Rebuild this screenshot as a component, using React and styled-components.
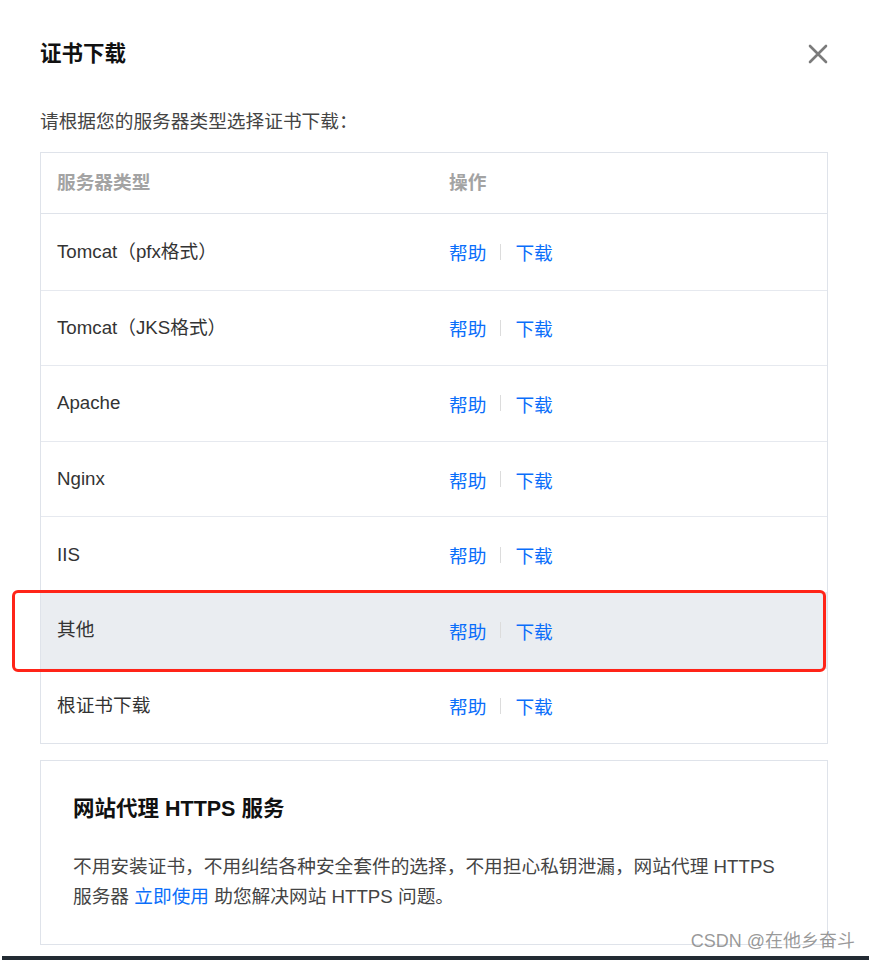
import React from "react";
import styled, { createGlobalStyle } from "styled-components";

const GlobalStyle = createGlobalStyle`
  body {
    margin: 0;
    background: #fff;
    font-family: "Liberation Sans", "Noto Sans CJK SC", sans-serif;
    color: #333;
  }
`;

const Page = styled.div`
  position: relative;
  width: 869px;
  height: 960px;
  overflow: hidden;
`;

const Dialog = styled.div`
  padding: 36px 41px 0 40px;
`;

const Header = styled.div`
  display: flex;
  justify-content: space-between;
  align-items: center;
  height: 36px;
`;

const Title = styled.h1`
  margin: 0;
  font-size: 21.5px;
  font-weight: 700;
  color: #111;
  line-height: 36px;
`;

const CloseButton = styled.button`
  display: flex;
  align-items: center;
  justify-content: center;
  width: 24px;
  height: 24px;
  margin-right: -2px;
  padding: 0;
  border: none;
  background: none;
  cursor: pointer;
`;

const Intro = styled.p`
  margin: 35px 0 15px;
  font-size: 18.7px;
  line-height: 30px;
  color: #444;
`;

const Table = styled.div`
  border: 1px solid #dfe3ea;
`;

const Row = styled.div`
  position: relative;
  display: grid;
  grid-template-columns: 408px 1fr;
  align-items: center;
  height: ${(p) => (p.$head ? "61px" : "75.6px")};
  border-top: ${(p) => (p.$first ? "none" : "1px solid #e6e9ef")};
  border-bottom: ${(p) => (p.$head ? "1px solid #dfe3ea" : "none")};
  background: ${(p) => (p.$active ? "#eaedf1" : "#fff")};
  box-sizing: border-box;
`;

const Cell = styled.div`
  padding-left: ${(p) => (p.$first ? "16px" : "0")};
  font-size: 18.7px;
  line-height: 28px;
  font-weight: ${(p) => (p.$head ? 700 : 400)};
  color: ${(p) => (p.$head ? "#a3a3a3" : "#333")};
`;

const Actions = styled.div`
  display: flex;
  align-items: center;
  gap: 14px;
  font-size: 18.7px;
`;

const Link = styled.a`
  color: #0a6efa;
  text-decoration: none;
  cursor: pointer;
`;

const Divider = styled.span`
  width: 1px;
  height: 16px;
  background: #dcdcdc;
`;

const Highlight = styled.div`
  position: absolute;
  z-index: 2;
  left: -29px;
  top: -3px;
  width: 814px;
  height: 82px;
  border: 3.5px solid #ff2418;
  border-radius: 6px;
  box-sizing: border-box;
  pointer-events: none;
`;

const Promo = styled.div`
  margin-top: 16px;
  padding: 33px 32px 32px;
  border: 1px solid #dfe3ea;
`;

const PromoTitle = styled.h2`
  margin: 0;
  font-size: 21.5px;
  font-weight: 700;
  line-height: 30px;
  color: #111;
`;

const PromoText = styled.p`
  margin: 28px 0 0;
  font-size: 18.7px;
  line-height: 30px;
  color: #444;
`;

const BottomBar = styled.div`
  margin: 11px 0 0 2px;
  height: 6px;
  background: #232b33;
`;

const Watermark = styled.span`
  position: absolute;
  right: 14px;
  top: 929px;
  font-size: 18px;
  line-height: 24px;
  color: rgba(120, 120, 120, 0.75);
`;

const servers = [
  "Tomcat（pfx格式）",
  "Tomcat（JKS格式）",
  "Apache",
  "Nginx",
  "IIS",
  "其他",
  "根证书下载",
];

const CloseIcon = () => (
  <svg width="20" height="20" viewBox="0 0 20 20">
    <path
      d="M2 2 L18 18 M18 2 L2 18"
      stroke="#7b7b7b"
      strokeWidth="2.6"
      strokeLinecap="round"
    />
  </svg>
);

const App = () => {
  return (
    <Page>
      <GlobalStyle />
      <Dialog>
        <Header>
          <Title>证书下载</Title>
          <CloseButton aria-label="关闭">
            <CloseIcon />
          </CloseButton>
        </Header>
        <Intro>请根据您的服务器类型选择证书下载：</Intro>
        <Table>
          <Row $head $first>
            <Cell $head $first>服务器类型</Cell>
            <Cell $head>操作</Cell>
          </Row>
          {servers.map((name, i) => (
            <Row key={name} $first={i === 0} $active={name === "其他"}>
              <Cell $first>{name}</Cell>
              <Actions>
                <Link>帮助</Link>
                <Divider />
                <Link>下载</Link>
              </Actions>
              {name === "其他" && <Highlight />}
            </Row>
          ))}
        </Table>
        <Promo>
          <PromoTitle>网站代理 HTTPS 服务</PromoTitle>
          <PromoText>
            不用安装证书，不用纠结各种安全套件的选择，不用担心私钥泄漏，网站代理 HTTPS
            <br />
            服务器 <Link>立即使用</Link> 助您解决网站 HTTPS 问题。
          </PromoText>
        </Promo>
      </Dialog>
      <BottomBar />
      <Watermark>CSDN @在他乡奋斗</Watermark>
    </Page>
  );
};

export default App;
